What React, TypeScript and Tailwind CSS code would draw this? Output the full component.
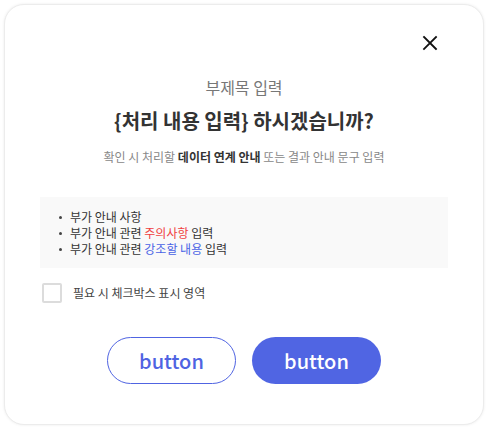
export default function App() {
  const items = [
    <>부가 안내 사항</>,
    <>
      부가 안내 관련 <span className="text-[#f04040]">주의사항</span> 입력
    </>,
    <>
      부가 안내 관련 <span className="text-[#4a63e6]">강조할 내용</span> 입력
    </>,
  ];
  return (
    <div
      className="w-[488px] h-[429px] bg-white p-[4px]"
      style={{ fontFamily: '"Noto Sans CJK KR", "Noto Sans", sans-serif' }}
    >
      <div className="relative w-[480px] h-[421px] rounded-[20px] bg-white border border-[#ececec] shadow-[0_0_3px_rgba(0,0,0,0.08)] flex flex-col items-center">
        <button className="absolute right-[43px] top-[28px] w-[20px] h-[20px] flex items-center justify-center">
          <svg width="16" height="16" viewBox="0 0 16 16">
            <path d="M2 2 L14 14 M14 2 L2 14" stroke="#111" strokeWidth="1.8" strokeLinecap="square" />
          </svg>
        </button>
        <div className="mt-[72px] text-[16px] leading-[20px] text-[#777]">부제목 입력</div>
        <div className="mt-[10px] text-[20px] leading-[28px] font-bold text-[#333]">
          {'{처리 내용 입력} 하시겠습니까?'}
        </div>
        <div className="mt-[14px] text-[12px] leading-[16px] text-[#888]">
          확인 시 처리할 <span className="font-bold text-[#333]">데이터 연계 안내</span> 또는 결과 안내 문구 입력
        </div>
        <div className="mt-[32px] w-[408px] bg-[#f9f9f9] pl-[19px] pt-[12px] pb-[11px] flex flex-col">
          {items.map((c, i) => (
            <div key={i} className="flex items-center gap-[8px] text-[12px] leading-[16px] text-[#333]">
              <span className="w-[3px] h-[3px] rounded-full bg-[#444]" />
              <span>{c}</span>
            </div>
          ))}
        </div>
        <label className="self-start ml-[37px] mt-[15px] flex items-center gap-[11px]">
          <span className="w-[20px] h-[20px] border-2 border-[#dcdcdc] rounded-[2px] bg-white" />
          <span className="text-[12px] leading-[16px] text-[#444]">필요 시 체크박스 표시 영역</span>
        </label>
        <div className="mt-[34px] flex gap-[16px]">
          <button className="w-[129px] h-[47px] rounded-full border border-[#5064e2] bg-white text-[#4f63e2] text-[20px] font-medium">
            button
          </button>
          <button className="w-[129px] h-[47px] rounded-full bg-[#5065e3] text-white text-[20px] font-medium">
            button
          </button>
        </div>
      </div>
    </div>
  );
}
